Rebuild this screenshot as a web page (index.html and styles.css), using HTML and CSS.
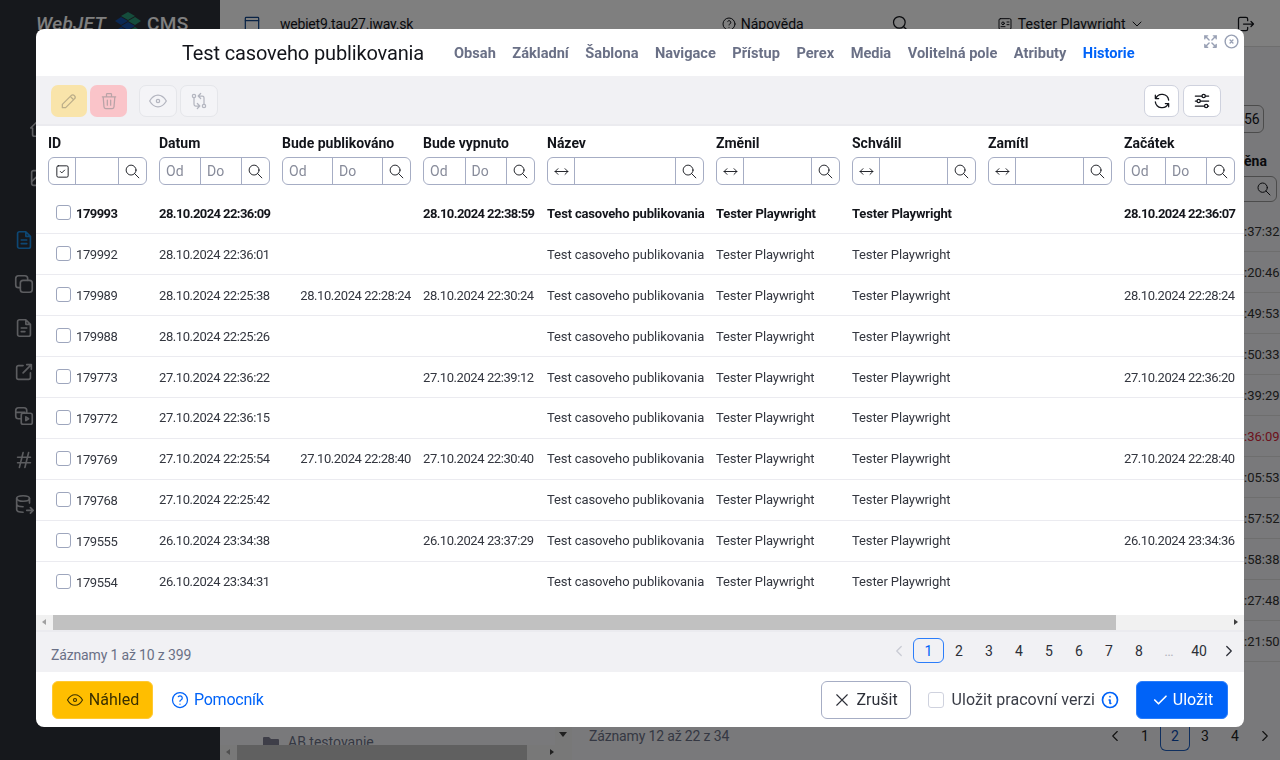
FILE: index.html
```html
<!DOCTYPE html>
<html>
<head>
<title>Test casoveho publikovania</title>
<link rel="stylesheet" href="styles.css">
</head>
<body>
<svg class="defs" width="0" height="0">
	<symbol id="i-search" viewBox="0 0 24 24"><circle cx="10" cy="10" r="7"/><path d="M21 21l-6-6"/></symbol>
	<symbol id="i-arrows" viewBox="0 0 24 24"><path d="M7 8l-4 4 4 4M17 8l4 4-4 4M3 12h18"/></symbol>
	<symbol id="i-eye" viewBox="0 0 24 24"><circle cx="12" cy="12" r="2"/><path d="M22 12c-2.700 4.700-6 7-10 7s-7.300-2.300-10-7c2.700-4.700 6-7 10-7s7.300 2.300 10 7"/></symbol>
	<symbol id="i-help" viewBox="0 0 24 24"><circle cx="12" cy="12" r="9"/><path d="M12 17v.01M12 13.500a1.500 1.500 0 0 1 1-1.500 2.600 2.600 0 1 0-3-4"/></symbol>
	<symbol id="i-left" viewBox="0 0 24 24"><path d="M15 6l-6 6 6 6"/></symbol>
	<symbol id="i-right" viewBox="0 0 24 24"><path d="M9 6l6 6-6 6"/></symbol>
</svg>

<!-- page under the dialog -->
<div class="page">
	<aside class="sidebar">
		<div class="logo">
			<span class="logo-web">WebJET</span>
			<svg class="cube" width="26" height="24" viewBox="0 0 26 24"><path class="cube-g" d="M13 0l7 4-7 4-7-4z"/><path class="cube-b" d="M6 5l7 4-7 4-6-4z"/><path class="cube-g" d="M20 5l6 4-6 4-7-4z"/><path class="cube-b" d="M13 10l7 4-7 4-7-4z"/><path class="cube-g" d="M20 15l6 4-6 4-7-4z"/><path class="cube-b" d="M6 15l7 4-7 4-6-4z"/></svg>
			<span class="logo-cms">CMS</span>
		</div>
		<div class="side-icons">
			<svg class="side-dim side-far" viewBox="0 0 24 24"><path d="M5 12H3l9-9 9 9h-2M5 12v7a2 2 0 0 0 2 2h10a2 2 0 0 0 2-2v-7"/></svg>
			<svg class="side-dim side-far side-second" viewBox="0 0 24 24"><rect x="4" y="4" width="16" height="16" rx="2"/><path d="M4 16l5-5 4 4 3-3 4 4"/></svg>
			<svg class="side-on" viewBox="0 0 24 24"><path d="M14 3v5h5M5 5a2 2 0 0 1 2-2h7l5 5v11a2 2 0 0 1-2 2H7a2 2 0 0 1-2-2zM9 12h6M9 16h6"/></svg>
			<svg class="side-dim" viewBox="0 0 24 24"><rect x="8" y="8" width="13" height="13" rx="3"/><path d="M16 8V6a3 3 0 0 0-3-3H6a3 3 0 0 0-3 3v7a3 3 0 0 0 3 3h2"/></svg>
			<svg class="side-dim" viewBox="0 0 24 24"><path d="M14 3v5h5M5 5a2 2 0 0 1 2-2h7l5 5v11a2 2 0 0 1-2 2H7a2 2 0 0 1-2-2zM9 12h6M9 16h4"/></svg>
			<svg class="side-dim" viewBox="0 0 24 24"><path d="M11 5H6a2 2 0 0 0-2 2v11a2 2 0 0 0 2 2h11a2 2 0 0 0 2-2v-5M11 13l9-9M15 4h5v5"/></svg>
			<svg class="side-dim" viewBox="0 0 24 24"><rect x="9" y="9" width="12" height="12" rx="2"/><path d="M15 9V6a3 3 0 0 0-3-3H6a3 3 0 0 0-3 3v6a3 3 0 0 0 3 3h3M14 13l3 2-3 2zM3 8h10"/></svg>
			<svg class="side-dim" viewBox="0 0 24 24"><path d="M5 9h14M5 15h14M11 4L7 20M17 4l-4 16"/></svg>
			<svg class="side-dim" viewBox="0 0 24 24"><ellipse cx="11" cy="6" rx="7" ry="3"/><path d="M4 6v12c0 1.700 3 3 7 3M18 6v5M4 12c0 1.700 3 3 7 3M15 19h7M19 16l3 3-3 3"/></svg>
		</div>
	</aside>
	<main class="main">
		<header class="topbar">
			<svg class="top-icon top-page" viewBox="0 0 24 24"><rect x="4" y="4" width="16" height="16" rx="1"/><path d="M4 8h16"/></svg>
			<span class="top-domain">webjet9.tau27.iway.sk</span>
			<span class="top-help"><svg class="top-icon small"><use href="#i-help"/></svg> Nápověda</span>
			<svg class="top-icon top-search"><use href="#i-search"/></svg>
			<span class="top-user"><svg class="top-icon small user-card" viewBox="0 0 24 24"><rect x="3" y="4" width="18" height="16" rx="2"/><circle cx="9" cy="11" r="2"/><path d="M15 9h3M15 13h3M6 16h6"/></svg> Tester Playwright <svg class="top-icon small" viewBox="0 0 24 24"><path d="M6 9l6 6 6-6"/></svg></span>
			<svg class="top-icon top-out" viewBox="0 0 24 24"><path d="M14 8V6a2 2 0 0 0-2-2H5a2 2 0 0 0-2 2v12a2 2 0 0 0 2 2h7a2 2 0 0 0 2-2v-2M9 12h12M18 9l3 3-3 3"/></svg>
		</header>
		<div class="under-right">
			<div class="under-page">56</div>
			<div class="under-col">ěna</div>
			<div class="under-filter"><svg class="top-icon small"><use href="#i-search"/></svg></div>
			<div class="under-times">
				<div>:37:32</div><div>:20:46</div><div>:49:53</div><div>:50:33</div><div>:39:29</div><div class="late">:36:09</div><div>:05:53</div><div>:57:52</div><div>:58:38</div><div>:27:48</div><div>:21:50</div>
			</div>
		</div>
		<div class="under-bottom">
			<div class="under-tree">
				<svg class="under-foldericon" width="16" height="12" viewBox="0 0 16 12"><path d="M0 1a1 1 0 0 1 1-1h5l2 2h7a1 1 0 0 1 1 1v8a1 1 0 0 1-1 1H1a1 1 0 0 1-1-1z"/></svg>
				<span class="under-folder">AB testovanie</span>
				<div class="under-vscroll"><span class="arrow-d"></span></div>
				<div class="under-scroll"><span class="under-thumb"></span><span class="arrow-l"></span><span class="arrow-r"></span></div>
			</div>
			<span class="under-info">Záznamy 12 až 22 z 34</span>
			<div class="under-pager"><span><svg><use href="#i-left"/></svg></span><span>1</span><span class="cur">2</span><span>3</span><span>4</span><span><svg><use href="#i-right"/></svg></span></div>
		</div>
	</main>
</div>
<div class="backdrop"></div>

<!-- dialog -->
<div class="modal">
	<div class="modal-head">
		<h1 class="modal-title">Test casoveho publikovania</h1>
		<nav class="tabs">
			<a>Obsah</a><a>Základní</a><a>Šablona</a><a>Navigace</a><a>Přístup</a><a>Perex</a><a>Media</a><a>Volitelná pole</a><a>Atributy</a><a class="active">Historie</a>
		</nav>
		<div class="head-icons">
			<svg class="ic-expand" viewBox="0 0 24 24"><path d="M16 4h4v4M14 10l6-6M8 20H4v-4M4 20l6-6M16 20h4v-4M14 14l6 6M8 4H4v4M4 4l6 6"/></svg>
			<svg class="ic-close" viewBox="0 0 24 24"><circle cx="12" cy="12" r="9"/><path d="M10 10l4 4M14 10l-4 4"/></svg>
		</div>
	</div>

	<div class="toolbar">
		<button class="tbtn yellow"><svg viewBox="0 0 24 24"><path d="M4 20h4L18.500 9.500a2.800 2.800 0 0 0-4-4L4 16zM13.500 6.500l4 4"/></svg></button>
		<button class="tbtn red"><svg viewBox="0 0 24 24"><path d="M4 7h16M10 11v6M14 11v6M5 7l1 12a2 2 0 0 0 2 2h8a2 2 0 0 0 2-2l1-12M9 7V4a1 1 0 0 1 1-1h4a1 1 0 0 1 1 1v3"/></svg></button>
		<button class="tbtn off first-off"><svg><use href="#i-eye"/></svg></button>
		<button class="tbtn off"><svg viewBox="0 0 24 24"><circle cx="6" cy="6" r="2"/><circle cx="18" cy="18" r="2"/><path d="M11 6h5a2 2 0 0 1 2 2v8M14 9l-3-3 3-3M13 18H8a2 2 0 0 1-2-2V8M10 15l3 3-3 3"/></svg></button>
		<span class="spacer"></span>
		<button class="tbtn plain"><svg viewBox="0 0 24 24"><path d="M20 11A8.100 8.100 0 0 0 4.500 9M4 5v4h4M4 13a8.100 8.100 0 0 0 15.500 2M20 19v-4h-4"/></svg></button>
		<button class="tbtn plain wide"><svg viewBox="0 0 24 24"><circle cx="14" cy="6" r="2"/><path d="M4 6h8M16 6h4"/><circle cx="8" cy="12" r="2"/><path d="M4 12h2M10 12h10"/><circle cx="17" cy="18" r="2"/><path d="M4 18h11M19 18h1"/></svg></button>
	</div>

	<div class="table-wrap">
		<table class="grid">
			<colgroup><col class="c1"><col class="c2"><col class="c3"><col class="c4"><col class="c5"><col class="c6"><col class="c6"><col class="c6"><col class="c2"><col class="c9"></colgroup>
			<thead>
				<tr>
					<th>ID<div class="filter"><span class="f-btn"><svg viewBox="0 0 24 24"><rect x="4" y="4" width="16" height="16" rx="2"/><path d="M9 12l2 2 4-4"/></svg></span><span class="f-in"></span><span class="f-btn"><svg><use href="#i-search"/></svg></span></div></th>
					<th>Datum<div class="filter"><span class="f-in">Od</span><span class="f-in">Do</span><span class="f-btn"><svg><use href="#i-search"/></svg></span></div></th>
					<th>Bude publikováno<div class="filter"><span class="f-in">Od</span><span class="f-in">Do</span><span class="f-btn"><svg><use href="#i-search"/></svg></span></div></th>
					<th>Bude vypnuto<div class="filter"><span class="f-in">Od</span><span class="f-in">Do</span><span class="f-btn"><svg><use href="#i-search"/></svg></span></div></th>
					<th>Název<div class="filter"><span class="f-btn"><svg><use href="#i-arrows"/></svg></span><span class="f-in"></span><span class="f-btn"><svg><use href="#i-search"/></svg></span></div></th>
					<th>Změnil<div class="filter"><span class="f-btn"><svg><use href="#i-arrows"/></svg></span><span class="f-in"></span><span class="f-btn"><svg><use href="#i-search"/></svg></span></div></th>
					<th>Schválil<div class="filter"><span class="f-btn"><svg><use href="#i-arrows"/></svg></span><span class="f-in"></span><span class="f-btn"><svg><use href="#i-search"/></svg></span></div></th>
					<th>Zamítl<div class="filter"><span class="f-btn"><svg><use href="#i-arrows"/></svg></span><span class="f-in"></span><span class="f-btn"><svg><use href="#i-search"/></svg></span></div></th>
					<th>Začátek<div class="filter"><span class="f-in">Od</span><span class="f-in">Do</span><span class="f-btn"><svg><use href="#i-search"/></svg></span></div></th>
					<th></th>
				</tr>
			</thead>
			<tbody>
				<tr class="bold"><td><span class="cb"></span>179993</td><td>28.10.2024 22:36:09</td><td class="r"></td><td>28.10.2024 22:38:59</td><td>Test casoveho publikovania</td><td>Tester Playwright</td><td>Tester Playwright</td><td></td><td>28.10.2024 22:36:07</td><td></td></tr>
				<tr><td><span class="cb"></span>179992</td><td>28.10.2024 22:36:01</td><td class="r"></td><td></td><td>Test casoveho publikovania</td><td>Tester Playwright</td><td>Tester Playwright</td><td></td><td></td><td></td></tr>
				<tr><td><span class="cb"></span>179989</td><td>28.10.2024 22:25:38</td><td class="r">28.10.2024 22:28:24</td><td>28.10.2024 22:30:24</td><td>Test casoveho publikovania</td><td>Tester Playwright</td><td>Tester Playwright</td><td></td><td>28.10.2024 22:28:24</td><td></td></tr>
				<tr><td><span class="cb"></span>179988</td><td>28.10.2024 22:25:26</td><td class="r"></td><td></td><td>Test casoveho publikovania</td><td>Tester Playwright</td><td>Tester Playwright</td><td></td><td></td><td></td></tr>
				<tr><td><span class="cb"></span>179773</td><td>27.10.2024 22:36:22</td><td class="r"></td><td>27.10.2024 22:39:12</td><td>Test casoveho publikovania</td><td>Tester Playwright</td><td>Tester Playwright</td><td></td><td>27.10.2024 22:36:20</td><td></td></tr>
				<tr><td><span class="cb"></span>179772</td><td>27.10.2024 22:36:15</td><td class="r"></td><td></td><td>Test casoveho publikovania</td><td>Tester Playwright</td><td>Tester Playwright</td><td></td><td></td><td></td></tr>
				<tr><td><span class="cb"></span>179769</td><td>27.10.2024 22:25:54</td><td class="r">27.10.2024 22:28:40</td><td>27.10.2024 22:30:40</td><td>Test casoveho publikovania</td><td>Tester Playwright</td><td>Tester Playwright</td><td></td><td>27.10.2024 22:28:40</td><td></td></tr>
				<tr><td><span class="cb"></span>179768</td><td>27.10.2024 22:25:42</td><td class="r"></td><td></td><td>Test casoveho publikovania</td><td>Tester Playwright</td><td>Tester Playwright</td><td></td><td></td><td></td></tr>
				<tr><td><span class="cb"></span>179555</td><td>26.10.2024 23:34:38</td><td class="r"></td><td>26.10.2024 23:37:29</td><td>Test casoveho publikovania</td><td>Tester Playwright</td><td>Tester Playwright</td><td></td><td>26.10.2024 23:34:36</td><td></td></tr>
				<tr class="last"><td><span class="cb"></span>179554</td><td>26.10.2024 23:34:31</td><td class="r"></td><td></td><td>Test casoveho publikovania</td><td>Tester Playwright</td><td>Tester Playwright</td><td></td><td></td><td></td></tr>
			</tbody>
		</table>
	</div>

	<div class="hscroll">
		<span class="arrow-l"></span>
		<span class="thumb"></span>
		<span class="arrow-r"></span>
	</div>

	<div class="info-row">
		<span class="info">Záznamy 1 až 10 z 399</span>
		<div class="pager">
			<span class="pg pg-off"><svg><use href="#i-left"/></svg></span><span class="pg cur">1</span><span class="pg">2</span><span class="pg">3</span><span class="pg">4</span><span class="pg">5</span><span class="pg">6</span><span class="pg">7</span><span class="pg">8</span><span class="pg dots">…</span><span class="pg">40</span><span class="pg"><svg><use href="#i-right"/></svg></span>
		</div>
	</div>

	<div class="modal-foot">
		<button class="btn preview"><svg><use href="#i-eye"/></svg>Náhled</button>
		<a class="help-link"><svg><use href="#i-help"/></svg>Pomocník</a>
		<span class="spacer"></span>
		<button class="btn cancel"><svg viewBox="0 0 24 24"><path d="M5 5l14 14M19 5L5 19"/></svg>Zrušit</button>
		<label class="draft"><span class="cb big"></span>Uložit pracovní verzi<svg viewBox="0 0 24 24"><circle cx="12" cy="12" r="9"/><path d="M12 8v.01M11 12h1v4h1"/></svg></label>
		<button class="btn save"><svg viewBox="0 0 24 24"><path d="M5 12l5 5L20 7"/></svg>Uložit</button>
	</div>
</div>
</body>
</html>
```
FILE: styles.css
```css
* {
	box-sizing: border-box;
}
html, body {
	height: 100%;
}
body {
	margin: 0;
	overflow: hidden;
	font-family: Roboto, "Liberation Sans", sans-serif;
	font-size: 13px;
	color: #13151b;
}
svg {
	fill: none;
	stroke: currentColor;
	stroke-width: 1.5;
	stroke-linecap: round;
	stroke-linejoin: round;
}
.defs {
	position: absolute;
}
button {
	font: inherit;
	cursor: pointer;
}
.spacer {
	flex: 1;
}

/* page under the dialog */
.page {
	display: flex;
	height: 760px;
}
.sidebar {
	flex: none;
	width: 220px;
	background: #2d3038;
	color: #fff;
}
.logo {
	display: flex;
	align-items: center;
	height: 47px;
	padding-left: 36px;
	font-size: 19px;
	font-weight: 500;
	color: #fff;
}
.logo-web {
	font-style: italic;
	letter-spacing: .3px;
}
.cube {
	margin-left: 9px;
	stroke: none;
}
.cube-g {
	fill: #2a9a78;
}
.cube-b {
	fill: #1450a8;
}
.logo-cms {
	margin-left: 6px;
	font-size: 19px;
	letter-spacing: .4px;
}
.side-icons {
	display: flex;
	flex-direction: column;
	align-items: flex-start;
	gap: 22px;
	padding: 70px 0 0 13px;
}
.side-icons svg {
	width: 22px;
	height: 22px;
	stroke-width: 1.8;
}
.side-far {
	margin-left: 15px;
}
.side-second {
	margin-top: 6px;
}
.side-dim {
	color: #b8bac0;
}
.side-on {
	margin-top: 18px;
	color: #1a8fe8;
}
.main {
	flex: 1;
	position: relative;
	background: #f3f3f6;
	overflow: hidden;
}
.topbar {
	display: flex;
	align-items: center;
	height: 47px;
	padding-top: 1px;
	background: #fff;
	font-size: 14px;
	color: #13151b;
	border-bottom: 1px solid #ddd;
}
.top-icon {
	width: 20px;
	height: 20px;
	flex: none;
}
.top-icon.small {
	width: 16px;
	height: 16px;
	vertical-align: -3px;
}
.top-page {
	margin-left: 22px;
	color: #14488c;
}
.top-domain {
	margin-left: 18px;
	letter-spacing: -.2px;
}
.top-help {
	margin-left: 308px;
}
.top-search {
	margin-left: 87px;
}
.top-user {
	margin-left: 86px;
}
.user-card {
	margin-right: 2px;
}
.top-out {
	margin-left: 91px;
}
.under-right {
	position: absolute;
	left: 1010px;
	top: 105px;
	width: 50px;
	font-size: 14px;
}
.under-page {
	width: 34px;
	height: 28px;
	line-height: 26px;
	padding-left: 13px;
	border: 1px solid #999;
	border-radius: 6px;
}
.under-col {
	margin: 20px 0 0 14px;
	line-height: 16px;
	font-weight: 700;
}
.under-filter {
	width: 47px;
	margin-top: 7px;
	height: 26px;
	padding: 4px 0 0 25px;
	border: 1px solid #999;
	border-radius: 0 6px 6px 0;
	box-shadow: inset 17px 0 0 -16px #999;
}
.under-times {
	width: 50px;
	margin: 9px 0 0 14px;
}
.under-times div {
	height: 41px;
	line-height: 41px;
	font-size: 13px;
	color: #333;
	border-bottom: 1px solid #ddd;
}
.under-times .late {
	color: #d9253a;
}
.under-bottom {
	position: absolute;
	left: 0;
	bottom: 0;
	right: 0;
	height: 33px;
	display: flex;
}
.under-tree {
	flex: none;
	width: 360px;
	position: relative;
	overflow: hidden;
}
.under-foldericon {
	position: absolute;
	left: 43px;
	top: 10px;
	fill: #7c7c90;
	stroke: none;
}
.under-folder {
	position: absolute;
	left: 68px;
	top: 7px;
	color: #6a7086;
	font-size: 14px;
}
.under-vscroll {
	position: absolute;
	left: 335px;
	top: 0;
	bottom: 0;
	width: 17px;
	background: #f1f1f1;
}
.arrow-d {
	position: absolute;
	left: 4px;
	top: 5px;
	border: 4px solid transparent;
	border-top-width: 5px;
	border-top-color: #404040;
	border-bottom-width: 0;
}
.under-scroll {
	position: absolute;
	left: 0;
	right: 20px;
	bottom: 0;
	height: 15px;
	background: #f1f1f1;
}
.under-thumb {
	position: absolute;
	left: 17px;
	width: 290px;
	top: 0;
	bottom: 0;
	background: #c1c1c1;
}
.under-info {
	line-height: 18px;
	margin-left: 9px;
	color: #6a7086;
	font-size: 14px;
	letter-spacing: -.15px;
}
.under-pager {
	margin-left: auto;
	display: flex;
	height: 24px;
	font-size: 14px;
	color: #222;
}
.under-pager span {
	width: 30px;
	height: 24px;
	text-align: center;
	line-height: 18px;
}
.under-pager svg {
	width: 18px;
	height: 18px;
}
.under-pager .cur {
	border: 1px solid #1f5fbf;
	border-top: 0;
	border-radius: 0 0 6px 6px;
	color: #0a4ab0;
}

.backdrop {
	position: fixed;
	inset: 0;
	background: rgba(0, 0, 0, .5);
}

/* dialog */
.modal {
	position: fixed;
	left: 36px;
	top: 29px;
	width: 1208px;
	height: 698px;
	display: flex;
	flex-direction: column;
	background: #fff;
	border-radius: 8px;
	overflow: hidden;
}
.modal-head {
	position: relative;
	display: flex;
	align-items: center;
	height: 47px;
	padding-left: 146px;
}
.modal-title {
	margin: 0 30px 0 0;
	font-size: 20px;
	font-weight: 400;
	letter-spacing: -.14px;
	color: #13151b;
}
.tabs {
	display: flex;
	gap: 16.500px;
	font-size: 14.600px;
	font-weight: 700;
	color: #6a7086;
}
.tabs .active {
	color: #0063f8;
}
.head-icons svg {
	position: absolute;
	color: #98a0b4;
	width: 17px;
	height: 17px;
	stroke-width: 2;
}
.ic-expand {
	left: 1166px;
	top: 4px;
}
.ic-close {
	left: 1187px;
	top: 4px;
}

.toolbar {
	display: flex;
	align-items: center;
	height: 50px;
	padding: 2px 23px 0 15px;
	gap: 3px;
	background: #f1f1f4;
	border-bottom: 2px solid #ebebef;
}
.tbtn {
	display: flex;
	align-items: center;
	justify-content: center;
	width: 36px;
	height: 32px;
	padding: 0;
	border-radius: 7px;
	border: 1px solid transparent;
}
.tbtn svg {
	width: 20px;
	height: 20px;
}
.yellow {
	background: #f9e4aa;
	color: #bcae89;
}
.red {
	background: #fac4c9;
	width: 37px;
	color: #b9a3a7;
}
.off {
	background: #f4f4f7;
	border-color: #e5e6ea;
	color: #b4b6c0;
	width: 38px;
}
.first-off {
	margin-left: 9px;
}
.plain {
	background: #fff;
	border-color: #cfd2de;
	color: #13151b;
	width: 35px;
}
.plain.wide {
	width: 38px;
	margin-left: 1px;
}

.table-wrap {
	height: 489px;
	overflow: hidden;
}
.grid {
	table-layout: fixed;
	border-collapse: collapse;
	width: 1208px;
}
.c1 { width: 111px; }
.c2 { width: 123px; }
.c3 { width: 141px; }
.c4 { width: 124px; }
.c5 { width: 169px; }
.c6 { width: 136px; }
.c9 { width: 9px; }
.grid th {
	height: 67px;
	padding: 9px 0 0 12px;
	text-align: left;
	vertical-align: top;
	font-weight: 700;
	font-size: 14px;
	line-height: 16px;
}
.grid td {
	height: 40.900px;
	padding: 0 0 0 12px;
	white-space: nowrap;
	border-bottom: 1px solid #ebebf0;
	color: #33363f;
	font-size: 13px;
	letter-spacing: -.1px;
}
.grid .last td {
	border-bottom: 0;
}
.grid .bold td {
	font-weight: 700;
	letter-spacing: -.17px;
	color: #13151b;
}
.grid td:nth-child(1),
.grid td:nth-child(2),
.grid td:nth-child(3),
.grid td:nth-child(4),
.grid td:nth-child(9) {
	letter-spacing: -.42px;
}
.grid .bold td:nth-child(1),
.grid .bold td:nth-child(2),
.grid .bold td:nth-child(4),
.grid .bold td:nth-child(9) {
	letter-spacing: -.58px;
}
.grid td.r {
	text-align: right;
}
.filter {
	display: flex;
	height: 28px;
	margin-top: 6px;
	border: 1px solid #a6adc4;
	border-radius: 6px;
	font-weight: 400;
	overflow: hidden;
}
.f-btn {
	flex: none;
	width: 27px;
	display: flex;
	align-items: center;
	justify-content: center;
}
.f-btn svg {
	width: 17px;
	height: 17px;
	stroke-width: 1.300;
}
.f-in {
	flex: 1;
	min-width: 0;
	padding-left: 6px;
	line-height: 26px;
	font-size: 14px;
	color: #878b9a;
	border-right: 1px solid #a6adc4;
}
.f-btn:first-child {
	border-right: 1px solid #a6adc4;
}
.cb {
	display: inline-block;
	width: 15px;
	height: 15px;
	margin: 0 5px 0 8px;
	vertical-align: -2px;
	border: 1.500px solid #9ea6bd;
	border-radius: 3px;
	background: #fff;
}

.hscroll {
	position: relative;
	height: 15px;
	background: #f1f1f1;
}
.thumb {
	position: absolute;
	left: 17px;
	top: 0;
	bottom: 0;
	width: 1063px;
	background: #c1c1c1;
}
.arrow-l, .arrow-r {
	position: absolute;
	top: 4px;
	border: 3.500px solid transparent;
	border-left-width: 4px;
	border-right-width: 4px;
}
.arrow-l {
	left: 2px;
	border-right-color: #a0a0a0;
}
.arrow-r {
	right: 2px;
	border-left-color: #404040;
}

.info-row {
	display: flex;
	align-items: center;
	justify-content: space-between;
	height: 42px;
	padding: 0 0 0 15px;
	background: #f1f1f4;
	border-top: 2px solid #ebebef;
}
.info {
	color: #6a7086;
	font-size: 14px;
	letter-spacing: -.15px;
	margin-top: 5px;
}
.pager {
	display: flex;
	align-items: center;
	margin-top: -3px;
	font-size: 14px;
	color: #2c2f38;
}
.pg {
	display: flex;
	align-items: center;
	justify-content: center;
	width: 30px;
	height: 25px;
	border: 1px solid transparent;
}
.pg svg {
	width: 18px;
	height: 18px;
	stroke-width: 1.700;
}
.pg-off {
	color: #c9cbd4;
}
.pg.cur {
	width: 31px;
	margin-left: -1px;
	border-color: #2b7dfa;
	border-radius: 6px;
	color: #0063f8;
}
.pg.dots {
	color: #b4b6c0;
}

.modal-foot {
	display: flex;
	align-items: center;
	flex: 1;
	padding: 0 16px;
	font-size: 16px;
}
.btn {
	display: flex;
	align-items: center;
	justify-content: center;
	height: 38px;
	border-radius: 6px;
	padding: 0;
	font-size: 16px;
}
.btn svg {
	width: 18px;
	height: 18px;
}
.preview {
	width: 101px;
	gap: 5px;
	background: #ffbe00;
	border: 1px solid #ffc933;
	color: #3a3000;
}
.help-link {
	display: flex;
	align-items: center;
	gap: 4px;
	margin-left: 17px;
	letter-spacing: -.25px;
	color: #0063f8;
}
.help-link svg {
	width: 20px;
	height: 20px;
}
.cancel {
	width: 90px;
	gap: 5px;
	background: #fff;
	border: 1px solid #a6adc4;
	color: #2c2f38;
}
.draft {
	display: flex;
	align-items: center;
	margin: 0 16px 0 17px;
	letter-spacing: .05px;
	color: #3a3d47;
}
.draft svg {
	width: 20px;
	height: 20px;
	margin-left: 5px;
	stroke-width: 2;
	color: #0063f8;
}
.cb.big {
	width: 16px;
	height: 16px;
	margin: 0 8px 0 0;
	border: 1px solid #cfd2de;
}
.save {
	width: 92px;
	gap: 4px;
	background: #0063f8;
	border: 1px solid #2b7dfa;
	color: #fff;
}
.save svg {
	stroke-width: 2.200;
}
```
